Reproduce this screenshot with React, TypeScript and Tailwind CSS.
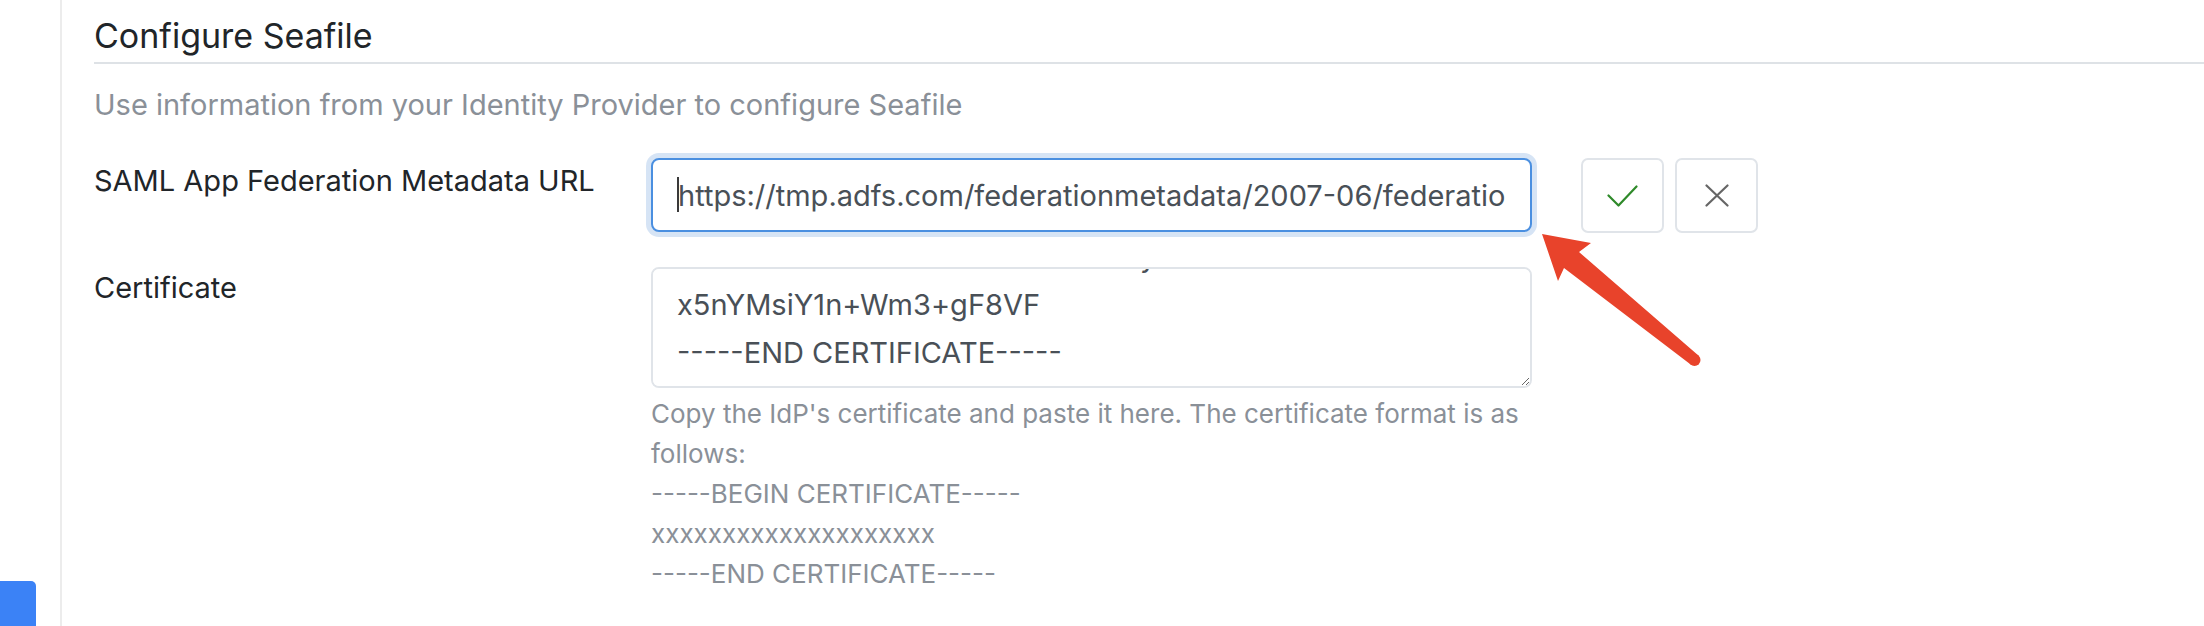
import React, { useEffect, useRef } from "react";

const certificate = [
  "-----BEGIN CERTIFICATE-----",
  "MIIC8DCCAdigAwIBAgIQdAhTRS9KLVtIVm8nAwOIWzANBgkqhkiG9w0BAQsFADA0",
  "MTIwMAYDVQQDEylNaWNyb3NvZnQgQXp1cmUgRmVkZXJhdGVkIFNTTyBDZXJ0aWZp",
  "AN4BeHuWLK8T0zS6nVRmIEHkLy",
  "x5nYMsiY1n+Wm3+gF8VF",
  "-----END CERTIFICATE-----",
].join("\n");

function App() {
  const certRef = useRef<HTMLTextAreaElement>(null);

  useEffect(() => {
    // keep the tail of the certificate in view, like after pasting
    if (certRef.current) {
      certRef.current.scrollTop = certRef.current.scrollHeight;
    }
  }, []);

  return (
    <div className="relative flex h-[626px] w-[2204px] overflow-hidden bg-white font-['Inter',sans-serif]">
      <aside className="flex w-[62px] shrink-0 flex-col justify-end border-r-2 border-[#ececec]">
        <div className="h-[45px] w-[36px] rounded-tr-[5px] bg-[#3b82f6]" />
      </aside>

      <main className="flex-1 pl-[32px] pt-[16px]">
        <h2 className="border-b-2 border-[#dee2e6] pb-[6px] text-[34px] leading-[40px] text-[#212529]">
          Configure Seafile
        </h2>
        <p className="mt-[21px] text-[29px] leading-[40px] text-[#8a9098]">
          Use information from your Identity Provider to configure Seafile
        </p>

        <div className="mt-[33px] flex items-start">
          <label className="w-[557px] shrink-0 pt-[3px] text-[29px] leading-[40px] text-[#212529]">
            SAML App Federation Metadata URL
          </label>
          <div className="relative">
            <input
              type="text"
              readOnly
              value="https://tmp.adfs.com/federationmetadata/2007-06/federationmetadata.xml"
              className="h-[74px] w-[881px] rounded-[8px] border-2 border-[#4a8fe0] bg-white px-[25px] text-[29px] leading-[40px] text-[#495057] outline-none ring-[5px] ring-[#d6e4f5]"
            />
            <span className="absolute left-[26px] top-[19px] h-[35px] w-[2px] bg-[#3a3a3a]" />
          </div>
          <div className="ml-[49px] flex gap-[11px]">
            <button className="flex h-[75px] w-[83px] items-center justify-center rounded-[7px] border-2 border-[#e0e4e9] bg-white">
              <svg width="31" height="22" viewBox="0 0 31 22" fill="none">
                <polyline
                  points="1.5,10.5 11.5,20.5 29.5,1.5"
                  stroke="#2f8a2a"
                  strokeWidth="2.2"
                  strokeLinecap="round"
                  strokeLinejoin="round"
                />
              </svg>
            </button>
            <button className="flex h-[75px] w-[83px] items-center justify-center rounded-[7px] border-2 border-[#e0e4e9] bg-white">
              <svg width="24" height="23" viewBox="0 0 24 23" fill="none">
                <path
                  d="M1.5 1.5 L22.5 21.5 M22.5 1.5 L1.5 21.5"
                  stroke="#666"
                  strokeWidth="2.2"
                  strokeLinecap="round"
                />
              </svg>
            </button>
          </div>
        </div>

        <div className="mt-[34px] flex items-start">
          <label className="w-[557px] shrink-0 pt-[1px] text-[29px] leading-[40px] text-[#212529]">
            Certificate
          </label>
          <div className="w-[881px]">
            <textarea
              ref={certRef}
              readOnly
              defaultValue={certificate}
              className="block h-[121px] w-[881px] rounded-[8px] border-2 border-[#e0e4e9] bg-white px-[24px] pb-[9px] pt-[10px] text-[29px] leading-[48px] text-[#495057] outline-none [scrollbar-width:none]"
            />
            <p className="mt-[6px] text-[26px] leading-[40px] text-[#8a9098]">
              Copy the IdP's certificate and paste it here. The certificate format is as follows:
              <br />
              -----BEGIN CERTIFICATE-----
              <br />
              xxxxxxxxxxxxxxxxxxxx
              <br />
              -----END CERTIFICATE-----
            </p>
          </div>
        </div>
      </main>

      {/* red annotation arrow pointing at the URL field */}
      <svg
        className="absolute left-[1530px] top-[225px]"
        width="180"
        height="150"
        viewBox="0 0 180 150"
      >
        <polygon
          points="12,9 61,18 49,27 169,131 160,139 34,43 28,56"
          fill="#e8432b"
        />
        <circle cx="164.5" cy="135" r="6" fill="#e8432b" />
      </svg>
    </div>
  );
}

export default App;
